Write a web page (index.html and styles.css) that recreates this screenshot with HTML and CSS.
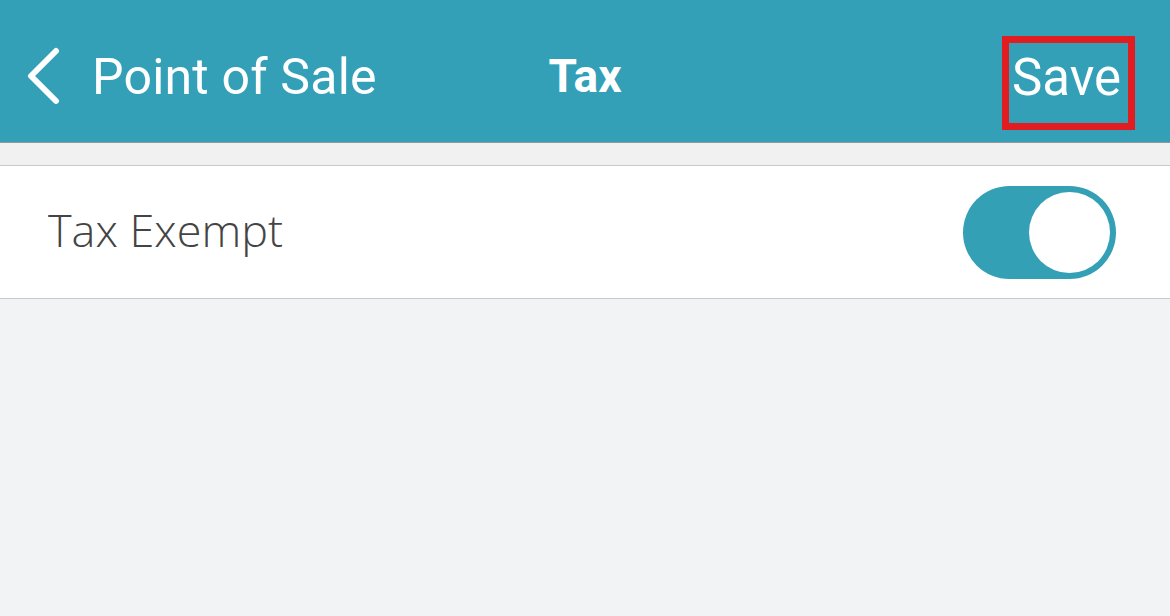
FILE: index.html
```html
<!DOCTYPE html>
<html>
<head>
<meta charset="utf-8">
<link rel="stylesheet" href="styles.css">
</head>
<body>
<header class="navbar">
  <div class="nav-left">
    <svg class="chev" width="40" height="60" viewBox="0 0 40 60"><path d="M31 4 L6 29 L31 54" fill="none" stroke="#fff" stroke-width="6" stroke-linecap="round" stroke-linejoin="round"/></svg>
    <span class="back-label">Point of Sale</span>
  </div>
  <div class="nav-title">Tax</div>
  <div class="nav-right"><span class="save">Save</span></div>
</header>
<div class="spacer"></div>
<div class="row">
  <span class="row-label">Tax Exempt</span>
  <div class="toggle"><div class="knob"></div></div>
</div>
<div class="rest"></div>
</body>
</html>
```
FILE: styles.css
```css
html, body { margin: 0; padding: 0; }
body { background: #f2f3f5; font-family: Roboto, "Liberation Sans", sans-serif; width: 1170px; height: 616px; overflow: hidden; }
.navbar { height: 143px; box-sizing: border-box; background: #33a0b8; border-bottom: 1px solid #8e9a9d; display: flex; align-items: flex-start; justify-content: space-between; position: relative; color: #fff; }
.nav-left { display: flex; align-items: center; padding-left: 25px; padding-top: 47px; }
.chev { display: block; }
.back-label { font-size: 50px; margin-left: 27px; letter-spacing: 0.2px; }
.nav-title { position: absolute; left: 0; right: 0; top: 49px; text-align: center; font-size: 46px; font-weight: 700; pointer-events: none; }
.nav-right { padding-right: 35px; padding-top: 36px; }
.save { display: inline-block; border: 7px solid #e11d22; box-sizing: border-box; width: 133px; height: 94px; font-size: 51px; line-height: 70px; padding-left: 3px; }
.spacer { height: 22px; background: #f1f1f1; border-bottom: 1px solid #c9c9c9; }
.row { height: 132px; background: #fff; border-bottom: 1px solid #c9c9c9; display: flex; align-items: center; justify-content: space-between; padding: 0 54px 0 48px; }
.row-label { font-family: "Open Sans", sans-serif; font-weight: 300; font-size: 45px; color: #444; margin-top: -6px; }
.toggle { width: 153px; height: 93px; border-radius: 47px; background: #33a0b5; position: relative; }
.knob { position: absolute; right: 6px; top: 6px; width: 81px; height: 81px; border-radius: 50%; background: #fff; }
```
